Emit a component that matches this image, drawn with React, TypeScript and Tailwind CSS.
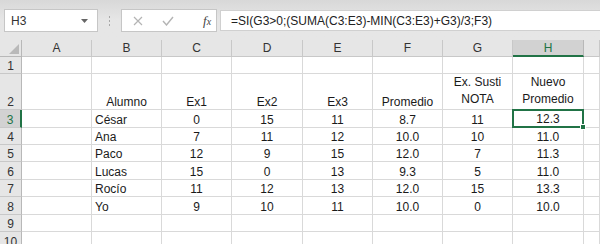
import React from "react";

const cols = "grid grid-cols-[22px_70px_70px_70px_71px_70px_70px_70px_71px_1fr]";
const letters = ["A", "B", "C", "D", "E", "F", "G", "H", ""];

const rows = [
  { n: "3", h: "h-[18px]", d: ["César", "0", "15", "11", "8.7", "11", "12.3"] },
  { n: "4", h: "h-[17px]", d: ["Ana", "7", "11", "12", "10.0", "10", "11.0"] },
  { n: "5", h: "h-[17px]", d: ["Paco", "12", "9", "15", "12.0", "7", "11.3"] },
  { n: "6", h: "h-[18px]", d: ["Lucas", "15", "0", "13", "9.3", "5", "11.0"] },
  { n: "7", h: "h-[17px]", d: ["Rocío", "11", "12", "13", "12.0", "15", "13.3"] },
  { n: "8", h: "h-[18px]", d: ["Yo", "9", "10", "11", "10.0", "0", "10.0"] },
];

const RowHead = ({ n, active }: { n: string; active?: boolean }) => (
  <div
    className={
      active
        ? "flex items-end justify-center pb-[1px] bg-[#d2d2d2] text-[#217346] border-r-2 border-r-[#217346] border-b border-b-[#c8c8c8]"
        : "flex items-end justify-center pb-[1px] bg-[#e6e6e6] text-[#333] border-r border-r-[#b8b8b8] border-b border-b-[#c8c8c8]"
    }
  >
    {n}
  </div>
);

const Cell = ({ children, left }: { children?: React.ReactNode; left?: boolean }) => (
  <div
    className={`flex items-end pb-[1px] border-r border-b border-[#d9d9d9] ${
      left ? "justify-start pl-[3px]" : "justify-center"
    }`}
  >
    {children}
  </div>
);

const EmptyRow = ({ n, h }: { n: string; h: string }) => (
  <div className={`${cols} ${h}`}>
    <RowHead n={n} />
    {letters.map((_, i) => (
      <Cell key={i} />
    ))}
  </div>
);

export default function App() {
  return (
    <div
      className="w-[600px] h-[244px] overflow-hidden bg-white text-[12px] text-[#1a1a1a] leading-none"
      style={{ fontFamily: '"Liberation Sans", Arial, sans-serif' }}
    >
      {/* formula bar */}
      <div className="h-[40px] bg-gradient-to-b from-[#d8d8d8] via-[#e6e6e6] to-[#e6e6e6] flex items-start pt-[9px] pl-[4px]">
        <div className="w-[94px] h-[23px] bg-white border border-[#c6c6c6] flex items-center justify-between pl-[6px] pr-[9px] text-[#333]">
          <span>H3</span>
          <svg width="7" height="4" viewBox="0 0 7 4">
            <path d="M0 0h7L3.5 4z" fill="#666" />
          </svg>
        </div>
        <div className="w-[23px] h-[23px] flex flex-col items-center justify-center gap-[2px]">
          <span className="w-[1px] h-[2px] bg-[#a8a8a8]" />
          <span className="w-[1px] h-[2px] bg-[#a8a8a8]" />
          <span className="w-[1px] h-[2px] bg-[#a8a8a8]" />
        </div>
        <div className="w-[96px] h-[23px] bg-white border border-[#c6c6c6] flex items-center pl-[11px] gap-[19px]">
          <svg width="10" height="10" viewBox="0 0 10 10">
            <path d="M1 1l8 8M9 1l-8 8" stroke="#b4b4b4" strokeWidth="1.2" />
          </svg>
          <svg width="12" height="10" viewBox="0 0 12 10">
            <path d="M1 5l3.5 4L11 1" stroke="#b4b4b4" strokeWidth="1.4" fill="none" />
          </svg>
          <span
            className="italic text-[13px] text-[#444] ml-[10px]"
            style={{ fontFamily: '"Liberation Serif", serif' }}
          >
            f<span className="text-[10px]">x</span>
          </span>
        </div>
        <div className="ml-[3px] mt-[1px] flex-1 h-[21px] bg-white border-y border-l border-[#d0d0d0] flex items-center pl-[10px] text-[#222]">
          =SI(G3&gt;0;(SUMA(C3:E3)-MIN(C3:E3)+G3)/3;F3)
        </div>
      </div>

      {/* column headers */}
      <div className={`${cols} h-[17px] bg-[#e6e6e6]`}>
        <div className="relative border-r border-b border-[#b8b8b8]">
          <svg className="absolute right-[2px] bottom-[2px]" width="10" height="10" viewBox="0 0 10 10">
            <path d="M10 0v10H0z" fill="#b9b9b9" />
          </svg>
        </div>
        {letters.map((l, i) =>
          l === "H" ? (
            <div
              key={i}
              className="flex items-center justify-center bg-[#d2d2d2] text-[#217346] border-r border-[#b8b8b8] border-b-2 border-b-[#217346]"
            >
              {l}
            </div>
          ) : (
            <div
              key={i}
              className="flex items-center justify-center text-[#333] border-r border-b border-[#c8c8c8]"
            >
              {l}
            </div>
          )
        )}
      </div>

      <EmptyRow n="1" h="h-[17px]" />

      {/* row 2 headings */}
      <div className={`${cols} h-[36px]`}>
        <RowHead n="2" />
        <Cell />
        <Cell>Alumno</Cell>
        <Cell>Ex1</Cell>
        <Cell>Ex2</Cell>
        <Cell>Ex3</Cell>
        <Cell>Promedio</Cell>
        <Cell>
          <span className="text-center leading-[17px]">
            Ex. Susti
            <br />
            NOTA
          </span>
        </Cell>
        <Cell>
          <span className="text-center leading-[17px]">
            Nuevo
            <br />
            Promedio
          </span>
        </Cell>
        <Cell />
      </div>

      {rows.map((r) => (
        <div key={r.n} className={`${cols} ${r.h}`}>
          <RowHead n={r.n} active={r.n === "3"} />
          <Cell />
          <Cell left>{r.d[0]}</Cell>
          {r.d.slice(1).map((v, i) =>
            r.n === "3" && i === 5 ? (
              <div
                key={i}
                className="relative flex items-end justify-center pb-[1px] border-2 border-[#217346] -mt-[1px] -ml-[1px]"
              >
                {v}
                <span className="absolute -right-[4px] -bottom-[4px] w-[6px] h-[6px] bg-[#217346] border border-white" />
              </div>
            ) : (
              <Cell key={i}>{v}</Cell>
            )
          )}
          <Cell />
        </div>
      ))}

      <EmptyRow n="9" h="h-[17px]" />
      <EmptyRow n="10" h="h-[18px]" />
    </div>
  );
}
